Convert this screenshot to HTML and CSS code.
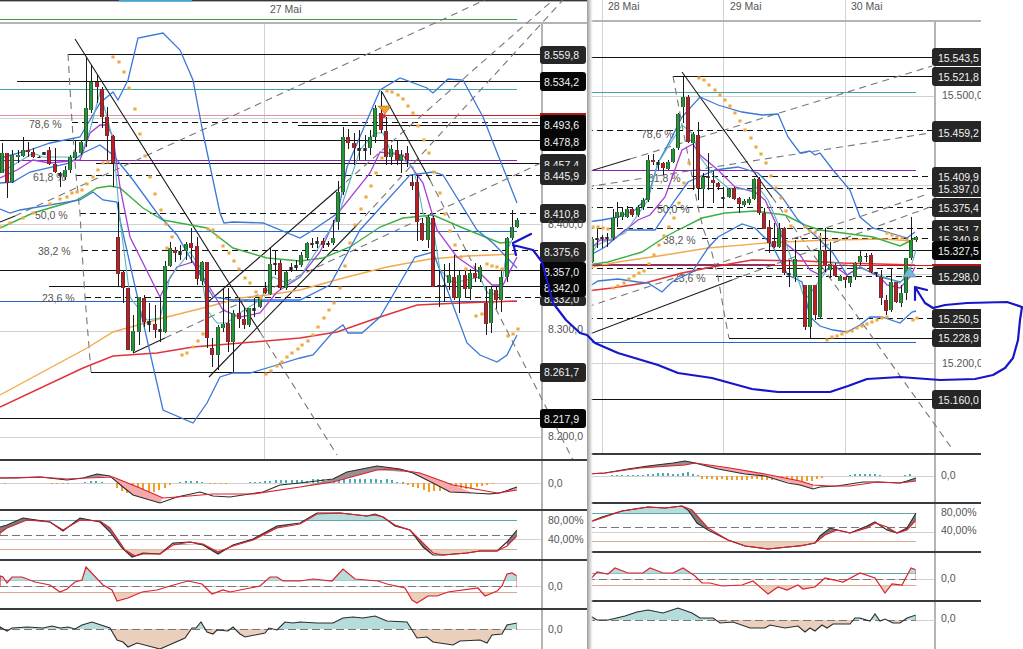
FILE: index.html
```html
<!DOCTYPE html>
<html>
<head>
<meta charset="UTF-8">
<title>Charts</title>
<link rel="stylesheet" href="styles.css">
</head>
<body>
<div class="screen">

<!-- left chart -->
<section class="chart chart-left">
<svg class="plot" width="587" height="649" viewBox="0 0 587 649">
<defs>
<clipPath id="lPlot"><rect x="0" y="0" width="516.6" height="649"/></clipPath>
<clipPath id="lStochUp"><rect x="0" y="511" width="517" height="9"/></clipPath>
<clipPath id="lStochDn"><rect x="0" y="549.5" width="517" height="10"/></clipPath>
<clipPath id="lCciUp"><rect x="0" y="561" width="517" height="19.7"/></clipPath>
<clipPath id="lCciDn"><rect x="0" y="592.7" width="517" height="16"/></clipPath>
<clipPath id="lMomUp"><rect x="0" y="610" width="517" height="19"/></clipPath>
<clipPath id="lMomDn"><rect x="0" y="629" width="517" height="20"/></clipPath>
<path id="lStoch" d="M0 535L0 533 7 528 27 520 50 522 63 530 80 520 100 521 110 528 125 550 135 556 143 554 160 554 173 545 190 542 203 544 218 552 233 546 253 540 277 528 300 524 317 514 340 513 367 516 375 515 383 517 395 525 410 530 423 543 433 553 443 555 467 553 480 551 497 551 507 546 517 536 517 535"/>
<path id="lCci" d="M0 586L0 576 3 577 7 583 12 577 22 577 35 582 50 585 60 592 67 589 75 582 82 580 86 567 103 585 112 590 117 601 128 598 142 592 157 590 170 586 188 581 202 584 212 594 223 590 230 592 250 588 260 586 270 577 277 577 283 581 300 581 313 579 332 581 343 569 355 579 378 581 387 584 405 588 412 600 417 603 428 596 437 596 448 592 478 588 485 596 497 591 502 586 507 574 512 573 517 576 517 586"/>
<path id="lMom" d="M0 629L0 627 7 631 12 628 27 627 43 628 52 626 60 628 68 627 75 629 82 625 92 622 110 628 117 640 123 642 128 647 137 643 160 649 185 638 192 628 196 628 201 622 207 632 213 634 217 630 228 631 233 627 240 634 245 637 265 633 269 628 277 630 285 622 293 623 300 622 317 623 333 623 343 618 353 617 363 618 375 616 387 621 407 622 417 638 427 637 433 642 453 645 460 641 480 640 487 643 492 635 502 634 507 625 517 623 517 629"/>
<path id="lGreen" d="M2 153V173M12 155V182M18 155V157M23 150V156M65 170V177M70 157V170M75 152V158M81 142V153M86 108V140M91 82V110M133 331V351M139 297V332M165 266V332M170 248V266M186 244V251M202 262V281M218 327V355M223 324V328M233 313V342M249 308V325M260 298V307M270 264V294M286 272V288M301 255V265M307 243V258M333 238V243M338 192V222M343 137V192M370 137V148M375 108V137M391 149V157M401 155V160M428 217V240M449 275V283M459 275V298M470 273V289M480 267V279M491 289V323M501 277V300M507 238V277M512 227V238M517 220V227"/>
<path id="lRed" d="M7 153V183M28 150V152M33 152V157M49 150V164M55 164V172M97 82V87M102 89V117M107 117V136M113 136V163M118 237V274M123 272V288M128 288V350M144 298V322M155 324V330M175 250V253M191 243V248M197 246V279M207 262V338M212 348V355M228 323V342M239 313V319M244 319V325M265 288V293M280 263V288M323 241V245M348 137V143M354 143V148M381 113V130M386 131V157M397 150V160M407 153V160M412 182V186M417 182V222M422 223V240M433 218V287M454 277V298M465 275V289M475 273V278M486 303V324M496 290V300"/>
</defs>

<rect class="top-rule" x="0" y="0" width="587" height="1.4"/>
<rect class="top-tab" x="119" y="0" width="73" height="1.4"/>
<text class="date" x="270" y="13">27 Mai</text>

<path class="grid crisp" d="M264.5 24V460M0 118.5H541M0 224.5H541M0 331.5H541M0 437.5H541M0 483.5H541M0 539.5H541M0 586.5H541"/>
<path class="g-line crisp" d="M0 19.5H517"/>
<path class="frame crisp" d="M0 22.5H587M541.5 22V649"/>

<path class="pink crisp" d="M0 115.5H380"/>
<path class="teal crisp" d="M0 89.5H517"/>
<path class="blue crisp" d="M0 231.5H517M0 301.5H517"/>
<path class="purple crisp" d="M0 160.5H517"/>
<path class="level crisp" d="M68 54.5H540M17 81.5H540M298 125.5H540M0 140.5H540M96 163.5H540M0 270.5H540M49 286.5H540M91 372.5H540M0 418.5H540"/>
<path class="fib crisp" d="M72 122.5H540M76 175.5H540M80 213.5H540M82 250.5H540M85 297.5H540"/>
<path class="red-level crisp" d="M380 115.5H541"/>

<text class="fib-text" x="29" y="128">78,6 %</text>
<text class="fib-text" x="33" y="181">61,8 %</text>
<text class="fib-text" x="35" y="219">50,0 %</text>
<text class="fib-text" x="38" y="255">38,2 %</text>
<text class="fib-text" x="42" y="302">23,6 %</text>

<path class="dash" d="M68 54L72 122 76 175 80 213 82 250 85 297 91 372"/>
<path class="dash" d="M15 216L485 0M165 338L541 163M337 190L553 0M357 225L563 0M260 332L337 455M430 180L573 460"/>
<path class="trend" d="M75 39L260 332M382 92L430 180M0 222L15 216M133 353L165 338M208 302L337 190M209 377L357 225"/>

<path class="ma-red" d="M0 407L83 368 113 356 157 353 193 347 217 345 300 338 337 332 380 317 417 305 460 303 517 301"/>
<path class="ma-orange" d="M0 395L87 348 113 332 163 318 207 307 240 298 267 295 300 290 347 277 387 267 430 259 467 256 517 254"/>
<path class="ma-green" d="M0 228L33 213 77 200 97 188 110 186 120 188 143 208 163 220 207 228 233 248 267 258 300 261 323 258 350 247 380 227 403 218 433 215 463 228 500 243 510 242"/>
<path class="band" d="M0 158L30 150 50 143 80 137 100 103 113 92 118 100 128 80 138 38 163 33 180 50 193 80 203 133 220 213 224 223 233 222 263 223 300 238 313 230 338 213 347 167 380 90 400 78 427 88 433 93 448 79 463 80 483 117 517 203"/>
<path class="band" d="M0 183L13 182 30 172 70 163 83 153 100 145 113 155 133 180 157 213 177 235 213 297 233 300 267 300 300 300 330 285 360 230 410 175 433 172 443 175 477 230 493 243 517 268"/>
<path class="band" d="M0 209L10 213 20 210 80 200 93 192 103 200 117 202 120 220 163 410 193 423 207 403 220 377 233 373 250 373 277 365 300 358 313 355 333 332 343 325 348 333 362 333 380 317 400 283 415 257 433 252 450 297 467 343 480 355 497 362 507 355 517 335"/>
<path class="ma-purple" d="M0 178L17 170 33 160 50 163 80 160 90 133 100 125 107 125 113 137 120 187 130 237 160 297 167 283 177 267 193 262 207 283 223 310 240 317 260 313 277 292 300 277 320 252 338 213 370 173 380 152 403 155 423 183 437 230 457 257 480 273 492 285 503 285 517 257"/>
<path class="ma-cyan" d="M0 173L17 163 33 153 43 157 80 157 90 130 100 92 107 117 113 140 120 220 130 297 147 320 160 318 170 277 190 252 200 267 207 310 217 323 227 323 240 313 260 300 273 277 287 283 300 277 338 217 360 150 375 133 383 133 390 150 413 167 418 187 423 213 433 227 440 270 453 283 480 277 487 293 500 295 507 250 512 240"/>

<path class="wick" d="M2 143V173M7 153V198M12 150V183M18 150V163M23 137V157M28 142V157M33 148V158M39 156V158M44 152V155M49 147V165M55 148V173M60 172V187M65 166V180M70 155V173M75 140V160M81 140V155M86 57V147M91 65V113M97 75V103M102 87V128M107 107V160M113 135V187M118 202V286M123 270V303M128 288V350M133 315V353M139 297V345M144 295V327M149 303V332M155 305V338M160 297V342M165 261V333M170 242V267M175 247V262M180 245V260M186 242V260M191 228V263M197 237V285M202 261V285M207 262V348M212 338V367M218 325V370M223 288V332M228 288V352M233 310V372M239 298V328M244 308V329M249 308V327M254 298V317M260 297V308M265 282V294M270 248V295M275 250V275M280 260V290M286 270V290M291 263V272M296 260V270M301 252V267M307 242V260M312 238V248M317 237V248M323 238V248M328 241V247M333 220V245M338 181V230M343 127V195M348 129V149M354 133V165M359 130V160M365 135V160M370 130V155M375 105V143M381 91V133M386 117V165M391 145V165M397 140V165M401 150V173M407 146V167M412 175V190M417 175V241M422 218V241M428 215V248M433 216V287M439 270V307M444 264V302M449 263V290M454 255V300M459 270V313M465 268V298M470 269V300M475 263V282M480 265V282M486 287V335M491 286V333M496 287V309M501 268V312M507 237V282M512 210V240M517 218V228"/>
<path class="body-k" d="M39 157V158M44 152V155M60 173V176M149 321V325M160 329V332M180 251V255M254 308V311M275 263V265M291 267V270M296 265V268M312 243V245M317 241V244M328 243V245M359 148V151M365 148V151M439 285V287M444 285V287"/>
<use href="#lGreen" class="edge"/><use href="#lGreen" class="body-g"/>
<use href="#lRed" class="edge"/><use href="#lRed" class="body-r"/>

<path class="sar" d="M0 227h0M10 223h0M23 218h0M33 213h0M50 204h0M60 199h0M67 197h0M72 193h0M77 192h0M82 190h0M87 184h0M93 177h0M98 170h0M103 163h0M108 162h0M113 57h0M119 62h0M124 72h0M129 88h0M135 109h0M140 134h0M145 156h0M150 177h0M155 194h0M161 210h0M166 224h0M172 237h0M167 248h0M182 355h0M187 353h0M193 347h0M198 341h0M203 334h0M208 229h0M213 230h0M218 237h0M223 246h0M229 253h0M234 261h0M239 269h0M245 278h0M250 283h0M256 292h0M261 298h0M266 374h0M271 371h0M277 366h0M282 362h0M287 357h0M292 353h0M298 349h0M302 345h0M308 341h0M313 335h0M318 327h0M324 318h0M329 310h0M334 303h0M340 288h0M345 266h0M350 243h0M355 225h0M361 209h0M366 197h0M371 186h0M376 173h0M382 158h0M387 91h0M392 92h0M398 95h0M403 99h0M408 106h0M413 113h0M418 126h0M424 140h0M429 153h0M434 172h0M440 193h0M445 214h0M450 231h0M455 245h0M461 257h0M466 269h0M476 316h0M482 314h0M487 264h0M492 266h0M497 267h0M502 269h0M508 336h0M513 334h0M518 329h0"/>
<path class="tri-sell" d="M378 106H391L385 114Z"/>
<circle class="dot-red" cx="384" cy="116" r="2"/>

<rect class="tag" x="540" y="46" width="46" height="18" rx="3"/><text class="tag-text" x="544" y="59">8.559,8</text>
<rect class="tag tag-black" x="540" y="72" width="46" height="19" rx="3"/><text class="tag-text" x="544" y="86">8.534,2</text>
<rect class="red-tag" x="540" y="113" width="46" height="4"/>
<rect class="tag tag-black" x="540" y="115" width="46" height="36" rx="3"/><text class="tag-text" x="544" y="129">8.493,6</text><text class="tag-text" x="544" y="146">8.478,8</text>
<rect class="tag" x="540" y="154" width="46" height="16" rx="3"/><text class="tag-text" x="544" y="169">8.457,4</text>
<rect class="tag" x="540" y="166" width="46" height="19" rx="3"/><text class="tag-text" x="544" y="180">8.445,9</text>
<rect class="tag" x="540" y="204" width="46" height="19" rx="3"/><text class="tag-text" x="544" y="218">8.410,8</text>
<text class="axis-text" x="548" y="228">8.400,0</text>
<rect class="tag" x="540" y="242" width="46" height="20" rx="3"/><text class="tag-text" x="544" y="256">8.375,6</text>
<rect class="tag" x="540" y="296" width="46" height="10" rx="3"/><text class="tag-text" x="544" y="303">8.332,0</text>
<rect class="tag tag-black" x="540" y="262" width="46" height="35" rx="3"/><text class="tag-text" x="544" y="276">8.357,0</text><text class="tag-text" x="544" y="292">8.342,0</text>
<text class="axis-text" x="548" y="333">8.300,0</text>
<rect class="tag" x="540" y="363" width="46" height="19" rx="3"/><text class="tag-text" x="544" y="376">8.261,7</text>
<rect class="tag tag-black" x="540" y="409" width="46" height="19" rx="3"/><text class="tag-text" x="544" y="423">8.217,9</text>
<text class="axis-text" x="548" y="440">8.200,0</text>

<!-- macd -->
<path class="hist-up" d="M85 483V482M91 483V481M96 483V481M102 483V482M180 483V482M186 483V481M191 483V481M197 483V481M202 483V482M250 483V482M255 483V482M260 483V482M265 483V481M270 483V481M276 483V480M281 483V480M286 483V480M292 483V480M297 483V480M302 483V480M307 483V481M313 483V479M318 483V479M323 483V479M329 483V479M334 483V479M339 483V479M344 483V479M350 483V479M355 483V479M360 483V479M365 483V479M371 483V479M376 483V479M381 483V480M387 483V479M392 483V480M397 483V482M403 483V482"/>
<path class="hist-dn" d="M5 483V484M52 483V484M57 483V484M63 483V484M68 483V484M117 483V488M122 483V491M127 483V493M133 483V495M138 483V494M143 483V494M149 483V492M154 483V492M159 483V490M165 483V488M170 483V485M210 483V484M215 483V484M221 483V484M226 483V484M403 483V484M408 483V485M413 483V487M418 483V488M424 483V490M429 483V492M434 483V491M440 483V491M445 483V490M450 483V491M456 483V490M461 483V490M466 483V489M471 483V488M477 483V487M482 483V486M487 483V485M493 483V484"/>
<path class="fill-dn-macd" d="M113 477L140 488 163 498 160 503 133 495 123 487ZM413 473L433 483 450 492 473 493 497 493 517 490 517 487 500 493 490 494 473 493 453 485 420 473Z"/>
<path class="fill-up-macd" d="M83 478L97 474 110 476 87 478ZM300 487L333 479 347 472 377 466 400 469 413 473 393 469 377 470 333 482ZM377 470L400 469 420 473Z"/>
<path class="line-k" d="M0 478L17 478 40 477 67 480 83 478 97 474 110 476 123 487 133 495 160 503 177 497 200 492 213 496 230 497 263 492 280 485 300 483 333 479 347 472 377 466 400 469 413 473 433 483 450 492 473 493 490 494 500 493 517 487"/>
<path class="line-r" d="M0 478L40 477 67 479 87 478 113 477 140 488 163 498 177 497 213 494 253 494 300 487 333 482 377 470 393 469 420 473 453 485 497 493 517 490"/>

<!-- stochastic -->
<path class="teal-soft crisp" d="M0 520.5H517"/>
<path class="dash-sub" d="M0 535.5H517"/>
<path class="tan-soft crisp" d="M0 549.5H517"/>
<use href="#lStoch" class="fill-up" clip-path="url(#lStochUp)"/>
<use href="#lStoch" class="fill-dn" clip-path="url(#lStochDn)"/>
<path class="fill-gap" d="M0 527L7 525 23 518 50 522 63 531 80 518 100 522 110 532 122 548 132 557 135 556 125 550 110 528 100 521 80 520 63 530 50 522 27 520 7 528 0 533ZM173 543L203 545 218 554 233 545 218 552 203 544 173 545ZM233 545L253 539 277 526 300 523 277 528 253 540ZM410 530L423 547 433 555 423 543ZM507 542L517 530 517 536 507 546Z"/>
<path class="line-k" d="M0 527L7 525 23 518 50 522 63 531 80 518 100 522 110 532 122 548 132 557 143 553 160 554 173 543 190 542 203 545 218 554 233 545 253 539 277 526 300 523 317 513 340 513 367 516 375 514 383 517 395 526 410 530 423 547 433 555 443 555 467 553 480 551 497 551 507 542 517 530"/>
<g clip-path="url(#lPlot)"><use href="#lStoch" class="line-r"/></g>

<!-- cci -->
<path class="teal-soft crisp" d="M0 580.5H517"/>
<path class="dash-sub" d="M0 586.5H517"/>
<path class="tan-soft crisp" d="M0 592.5H517"/>
<use href="#lCci" class="fill-up" clip-path="url(#lCciUp)"/>
<use href="#lCci" class="fill-dn" clip-path="url(#lCciDn)"/>
<g clip-path="url(#lPlot)"><use href="#lCci" class="line-r"/></g>

<!-- momentum -->
<use href="#lMom" class="fill-up" clip-path="url(#lMomUp)"/>
<use href="#lMom" class="fill-dn" clip-path="url(#lMomDn)"/>
<path class="dash-sub" d="M0 629.5H517"/>
<path class="grid crisp" d="M517 629.5H541"/>
<g clip-path="url(#lPlot)"><use href="#lMom" class="line-k"/></g>

<path class="split crisp" d="M0 460H587M0 510H587M0 560H587M0 609H587"/>
<text class="axis-text" x="548" y="487">0,0</text>
<text class="axis-text" x="548" y="524">80,00%</text>
<text class="axis-text" x="548" y="543">40,00%</text>
<text class="axis-text" x="548" y="590">0,0</text>
<text class="axis-text" x="548" y="633">0,0</text>
</svg>
</section>

<!-- right chart -->
<section class="chart chart-right">
<svg class="plot" width="436" height="649" viewBox="587 0 436 649">
<defs>
<clipPath id="rPlot"><rect x="587" y="0" width="328.6" height="649"/></clipPath>
<clipPath id="rStochUp"><rect x="587" y="504" width="330" height="9"/></clipPath>
<clipPath id="rStochDn"><rect x="587" y="541.5" width="330" height="10"/></clipPath>
<clipPath id="rCciUp"><rect x="587" y="553" width="330" height="20.5"/></clipPath>
<clipPath id="rCciDn"><rect x="587" y="585.5" width="330" height="15"/></clipPath>
<clipPath id="rMomUp"><rect x="587" y="601" width="330" height="19"/></clipPath>
<clipPath id="rMomDn"><rect x="587" y="620" width="330" height="29"/></clipPath>
<clipPath id="rTags"><rect x="587" y="0" width="394" height="649"/></clipPath>
<path id="rStoch" d="M587 527L587 523 602 518 622 511 648 507 665 508 682 506 692 510 708 528 728 540 745 546 768 549 788 547 805 545 815 543 825 535 837 530 850 533 867 528 875 523 887 527 897 533 907 530 916 520 916 527"/>
<path id="rCci" d="M587 579L587 583 597 572 608 574 615 568 628 573 643 573 650 568 663 573 673 573 683 568 695 576 702 583 710 583 722 586 742 585 753 581 768 594 778 587 787 590 798 585 803 589 815 587 825 578 843 582 860 573 875 578 885 593 892 584 902 585 911 568 916 570 916 579"/>
<path id="rMom" d="M587 620L587 621 592 617 597 620 608 620 625 616 637 612 648 610 663 613 678 608 692 613 700 618 713 618 720 623 733 622 750 628 765 628 770 625 785 628 798 626 805 632 810 628 815 631 822 625 827 628 833 624 850 624 855 618 860 618 870 621 875 614 880 621 885 619 893 623 900 623 907 618 916 615 916 620"/>
<path id="rGreen" d="M592 239V262M613 218V238M617 212V218M622 212V217M627 209V217M638 207V215M643 200V207M648 160V200M668 162V169M673 149V162M678 114V148M683 97V107M693 134V143M703 177V189M729 189V197M744 201V205M749 199V203M754 179V199M779 229V247M795 259V277M810 285V327M820 250V317M830 264V270M840 276V281M850 277V283M855 263V277M860 256V262M891 282V310M901 293V303M906 258V293M911 240V258M916 237V240"/>
<path id="rRed" d="M632 209V215M653 160V162M663 163V168M688 97V142M698 135V188M713 180V183M718 183V187M734 188V199M739 198V204M759 179V213M764 213V229M769 227V243M774 241V247M784 228V273M805 285V327M815 285V315M825 250V265M835 266V276M845 277V280M871 255V272M881 277V298M886 300V311M896 282V302"/>
</defs>

<text class="date" x="608" y="10">28 Mai</text>
<text class="date" x="730" y="10">29 Mai</text>
<text class="date" x="851" y="10">30 Mai</text>

<path class="grid crisp" d="M602.5 0V455M723.5 0V455M845.5 0V455M587 96.5H935M587 185.5H935M587 274.5H935M587 363.5H935M587 476.5H935M587 532.5H935M587 579.5H935"/>
<path class="frame crisp" d="M587 20.5H981M935 20V649"/>

<path class="teal crisp" d="M587 92.5H916"/>
<path class="purple crisp" d="M587 170.5H916"/>
<path class="purple-dim crisp" d="M587 264.5H775"/>
<path class="blue crisp" d="M587 342.5H916"/>
<path class="level crisp" d="M587 57.5H932M673 76.5H932M765 250.5H932M729 338.5H932M587 399.5H932"/>
<path class="fib crisp" d="M587 130.5H932M692 176.5H932M587 188.5H932M587 207.5H932M587 228.5H932M702 238.5H932M587 268.5H932M716 276.5H932M587 318.5H932"/>

<text class="fib-text" x="641" y="138">78,6 %</text>
<text class="fib-text" x="648" y="182">61,8 %</text>
<text class="fib-text" x="657" y="213">50,0 %</text>
<text class="fib-text" x="663" y="244">38,2 %</text>
<text class="fib-text" x="673" y="282">23,6 %</text>

<path class="dash" d="M673 76L683 130 692 176 698 207 703 228 712 253 718 277 725 318 729 338"/>
<path class="dash" d="M630 159L932 66M587 187L930 133M587 307L928 194M732 280L930 207M772 197L953 450"/>
<path class="trend" d="M587 172L630 159M682 72L772 197M587 335L732 280"/>

<path class="ma-red" d="M587 291L612 288 645 283 682 273 712 267 752 260 805 261 843 263 915 265"/>
<path class="ma-orange" d="M587 268L618 262 665 255 708 248 765 243 805 241 833 240 883 239 913 241"/>
<path class="ma-green" d="M587 265L608 262 642 252 665 237 678 230 702 218 725 213 755 211 785 215 805 225 820 230 843 233 873 237 900 246 916 238"/>
<path class="band" d="M587 222L602 220 618 217 635 210 648 197 658 163 672 137 682 117 700 97 718 105 742 112 762 115 778 114 788 137 800 153 810 151 815 155 820 153 833 170 850 190 860 217 873 228 897 235 907 238 915 232"/>
<path class="band" d="M587 257L605 247 625 230 655 230 675 200 688 182 715 170 738 167 758 173 782 197 798 220 820 240 833 253 847 275 860 267 880 277 900 282 907 277"/>
<path class="band" d="M587 288L598 281 618 279 638 282 648 283 662 292 672 282 692 272 708 248 718 237 742 224 755 228 772 245 785 270 788 275 802 282 810 317 820 326 833 330 847 332 860 325 870 317 882 317 900 323 912 312 916 311"/>
<path class="ma-purple" d="M587 253L600 240 613 240 628 228 638 220 650 215 665 197 682 150 693 144 700 155 718 170 735 187 755 192 765 200 785 243 800 255 810 270 820 275 833 265 847 275 860 267 880 277 887 285 900 288 910 277 915 267"/>
<path class="ma-cyan" d="M587 262L597 245 625 233 648 200 658 163 682 125 692 133 700 157 715 177 728 188 752 190 758 187 768 200 785 240 795 270 805 300 820 280 833 262 860 268 880 275 900 283 910 270 916 250"/>

<path class="wick" d="M592 237V263M597 228V248M602 235V248M607 233V247M613 209V240M617 202V227M622 207V220M627 206V218M632 207V217M638 205V217M643 198V210M648 155V202M653 154V165M658 160V170M663 162V175M668 160V170M673 148V163M678 113V150M683 76V123M688 95V143M693 132V190M698 122V200M703 173V208M708 153V190M713 171V203M718 182V190M723 187V208M729 188V198M734 187V200M739 197V213M744 199V207M749 197V205M754 178V200M759 177V215M764 208V229M769 220V253M774 223V248M779 223V248M784 227V275M789 260V287M795 240V282M805 285V330M810 285V338M815 285V320M820 233V318M825 228V272M830 242V278M835 263V277M840 275V281M845 277V288M850 277V287M855 262V280M860 250V265M866 253V262M871 253V273M876 272V276M881 270V305M886 295V315M891 268V312M896 282V303M901 285V307M906 258V300M911 217V260M916 236V242"/>
<path class="body-k" d="M597 238V240M602 237V239M607 237V239M658 162V165M708 176V178M723 197V199M789 273V275M866 256V257M876 272V274"/>
<use href="#rGreen" class="edge"/><use href="#rGreen" class="body-g"/>
<use href="#rRed" class="edge"/><use href="#rRed" class="body-r"/>

<path class="sar" d="M588 225h0M593 227h0M598 227h0M603 228h0M608 229h0M613 288h0M618 286h0M624 283h0M629 279h0M634 276h0M639 273h0M644 271h0M649 264h0M654 255h0M659 245h0M664 236h0M669 227h0M674 218h0M679 203h0M684 183h0M689 163h0M699 78h0M704 80h0M709 85h0M715 90h0M720 95h0M725 100h0M730 106h0M735 113h0M740 121h0M745 130h0M751 138h0M756 147h0M761 154h0M766 163h0M771 176h0M776 188h0M781 198h0M786 211h0M791 226h0M805 227h0M810 231h0M815 233h0M820 237h0M827 340h0M832 337h0M837 336h0M842 334h0M847 332h0M852 331h0M857 328h0M862 326h0M867 324h0M872 322h0M877 320h0M882 318h0M887 317h0M887 233h0M892 235h0M897 237h0M902 238h0M907 240h0M913 320h0M917 318h0"/>
<path class="tri-buy" d="M903 277H916L909 267Z"/>

<g clip-path="url(#rTags)">
<path class="red-level crisp" d="M587 265.5H981"/>
<rect class="tag" x="932" y="48" width="52" height="18" rx="3"/><text class="tag-text" x="938" y="62">15.543,5</text>
<rect class="tag" x="932" y="67" width="52" height="19" rx="3"/><text class="tag-text" x="938" y="81">15.521,8</text>
<text class="axis-text" x="942" y="99">15.500,0</text>
<rect class="tag" x="932" y="121" width="52" height="21" rx="3"/><text class="tag-text" x="938" y="137">15.459,2</text>
<rect class="tag" x="932" y="167" width="52" height="30" rx="3"/><text class="tag-text" x="938" y="181">15.409,9</text><text class="tag-text" x="938" y="193">15.397,0</text>
<rect class="tag" x="932" y="198" width="52" height="19" rx="3"/><text class="tag-text" x="938" y="212">15.375,4</text>
<rect class="tag" x="932" y="220" width="52" height="14" rx="3"/><text class="tag-text" x="938" y="234">15.351,7</text>
<rect class="tag" x="932" y="231" width="52" height="10"/><text class="tag-text" x="938" y="244">15.340,8</text>
<rect class="tag tag-black" x="932" y="241" width="52" height="19" rx="3"/><text class="tag-text" x="938" y="255">15.327,5</text>
<rect class="red-tag" x="932" y="264" width="52" height="2"/>
<rect class="tag" x="932" y="266" width="52" height="19" rx="3"/><text class="tag-text" x="938" y="281">15.298,0</text>
<rect class="tag" x="932" y="309" width="52" height="19" rx="3"/><text class="tag-text" x="938" y="323">15.250,5</text>
<rect class="tag" x="932" y="329" width="52" height="18" rx="3"/><text class="tag-text" x="938" y="342">15.228,9</text>
<text class="axis-text" x="942" y="367">15.200,0</text>
<rect class="tag" x="932" y="390" width="52" height="19" rx="3"/><text class="tag-text" x="938" y="404">15.160,0</text>
</g>

<!-- macd -->
<path class="hist-up" d="M612 476V475M617 476V475M622 476V475M628 476V475M633 476V475M638 476V475M643 476V475M648 476V474M653 476V474M658 476V473M663 476V473M668 476V473M673 476V474M678 476V474M683 476V473M688 476V472M693 476V474M698 476V475M850 476V475M855 476V474M860 476V474M865 476V474M870 476V474M875 476V474M880 476V475M905 476V475M910 476V474"/>
<path class="hist-dn" d="M702 476V479M707 476V479M712 476V479M717 476V480M722 476V479M727 476V480M732 476V480M737 476V480M742 476V480M747 476V480M752 476V479M757 476V479M762 476V480M767 476V480M772 476V480M777 476V480M782 476V480M787 476V480M792 476V480M797 476V480M802 476V481M807 476V481M812 476V481M817 476V479M822 476V478"/>
<path class="fill-dn-macd" d="M695 463L730 468 765 474 800 481 813 485 813 489 800 485 765 476 745 474 718 469Z"/>
<path class="fill-up-macd" d="M628 469L648 466 673 463 685 461 695 463 685 465 640 468ZM900 483L907 481 916 478 916 481Z"/>
<path class="line-k" d="M587 474L605 473 628 469 648 466 673 463 685 461 695 463 718 469 745 474 765 476 788 483 800 485 813 489 820 487 837 486 863 482 877 482 900 483 907 481 916 478"/>
<path class="line-r" d="M587 474L605 473 640 468 685 465 695 463 730 468 765 474 800 481 813 485 830 486 850 486 877 482 900 483 916 481"/>

<!-- stochastic -->
<path class="teal-soft crisp" d="M587 513.5H916"/>
<path class="dash-sub" d="M587 527.5H916"/>
<path class="tan-soft crisp" d="M587 541.5H916"/>
<use href="#rStoch" class="fill-up" clip-path="url(#rStochUp)"/>
<use href="#rStoch" class="fill-dn" clip-path="url(#rStochDn)"/>
<path class="fill-gap" d="M688 510L697 523 708 530 708 528 692 510ZM815 543L820 536 830 528 837 530 825 535ZM850 533L867 526 875 522 867 528ZM887 530L897 533 887 527ZM897 533L907 528 916 513 916 520 907 530Z"/>
<path class="line-k" d="M587 523L602 517 622 511 648 507 665 508 682 506 688 510 697 523 708 530 728 540 745 546 768 549 788 547 800 546 815 543 820 536 830 528 837 530 850 533 867 526 875 522 887 530 897 533 907 528 916 513"/>
<g clip-path="url(#rPlot)"><use href="#rStoch" class="line-r"/></g>

<!-- cci -->
<path class="teal-soft crisp" d="M587 573.5H916"/>
<path class="dash-sub" d="M587 579.5H916"/>
<path class="tan-soft crisp" d="M587 585.5H916"/>
<use href="#rCci" class="fill-up" clip-path="url(#rCciUp)"/>
<use href="#rCci" class="fill-dn" clip-path="url(#rCciDn)"/>
<g clip-path="url(#rPlot)"><use href="#rCci" class="line-r"/></g>

<!-- momentum -->
<use href="#rMom" class="fill-up" clip-path="url(#rMomUp)"/>
<use href="#rMom" class="fill-dn" clip-path="url(#rMomDn)"/>
<path class="dash-sub" d="M587 620.5H916"/>
<path class="grid crisp" d="M916 620.5H935"/>
<g clip-path="url(#rPlot)"><use href="#rMom" class="line-k"/></g>

<path class="split crisp" d="M587 454H981M587 503H981M587 552H981M587 601H981"/>
<text class="axis-text" x="941" y="479">0,0</text>
<text class="axis-text" x="941" y="516">80,00%</text>
<text class="axis-text" x="941" y="534">40,00%</text>
<text class="axis-text" x="941" y="582">0,0</text>
<text class="axis-text" x="941" y="622">0,0</text>
</svg>
</section>

<!-- pen strokes drawn over both charts -->
<svg class="pen" width="1023" height="649" viewBox="0 0 1023 649">
<path d="M531 234L513 243 516 255M513 245L533 250 542 262 553 303 566 320 580 333 587 335 595 343 618 353 658 365 678 373 712 378 752 389 778 392 805 392 830 392 848 386 867 379 900 377 940 380 975 379 993 375 1005 368 1013 358 1018 340 1020 320 1022 307 1007 302 967 303 945 305 933 308 925 303 915 287 915 300M915 287L927 290"/>
</svg>

</div>
</body>
</html>
```

FILE: styles.css
```css
*{margin: 0;padding: 0;}
body{background: #fff;font-family: "Liberation Sans", Arial, sans-serif;}
.screen{position: relative;display: flex;width: 1023px;height: 649px;overflow: hidden;background: #fff;}
.chart{position: relative;height: 649px;}
.chart-left{width: 587px;flex: none;}
.chart-right{flex: 1;}
.chart-right::after{content: "";position: absolute;top: 0;left: 0;width: 6px;height: 100%;background: linear-gradient(to right,#9a9a9a,#e8e8e8 70%,rgba(255,255,255,0));}
.plot{display: block;position: relative;}
.pen{position: absolute;top: 0;left: 0;pointer-events: none;}
.pen path{fill: none;stroke: #1616c8;stroke-width: 2.2;stroke-linejoin: round;stroke-linecap: round;}

.plot > path,.plot use{fill: none;}
.crisp{shape-rendering: crispEdges;}
.top-rule{fill: #33383c;}
.top-tab{fill: #35a8dc;}
.date{font-size: 10.5px;fill: #555;}
.fib-text{font-size: 10.5px;fill: #555;}
.axis-text{font-size: 10.5px;fill: #555;}
.tag{fill: #262626;}
.tag-black{fill: #060606;}
.red-tag{fill: #b01818;}
.tag-text{font-size: 10.5px;fill: #f2f2f2;}

.plot .grid{stroke: #d2d2d2;stroke-width: 1;}
.plot .frame{stroke: #b4b4b4;stroke-width: 2;}
.plot .g-line{stroke: #3d9a3d;stroke-width: 1;}
.plot .pink{stroke: #ef8f9c;stroke-width: 1;}
.plot .teal{stroke: #3fa3a8;stroke-width: 1;}
.plot .blue{stroke: #2565c8;stroke-width: 1;}
.plot .purple{stroke: #8a1fb8;stroke-width: 1;}
.plot .purple-dim{stroke: #5d3fa8;stroke-width: 1;}
.plot .level{stroke: #111;stroke-width: 1;}
.plot .fib{stroke: #111;stroke-width: 1;stroke-dasharray: 6 4;}
.plot .red-level{stroke: #c81e1e;stroke-width: 1;}
.plot .dash{stroke: #777;stroke-width: 1.1;stroke-dasharray: 7 5;}
.plot .trend{stroke: #1a1a1a;stroke-width: 1.1;}

.plot .ma-red{stroke: #e2323a;stroke-width: 1.5;}
.plot .ma-orange{stroke: #f3a94d;stroke-width: 1.4;}
.plot .ma-green{stroke: #3cb043;stroke-width: 1.4;}
.plot .band{stroke: #3a78d8;stroke-width: 1.3;}
.plot .ma-purple{stroke: #a63fd8;stroke-width: 1.3;}
.plot .ma-cyan{stroke: #55b5bd;stroke-width: 1.1;}

.plot .wick{stroke: #1a1a1a;stroke-width: 1;shape-rendering: crispEdges;}
.plot .edge{stroke: #2a2a2a;stroke-width: 3.8;}
.plot .body-g{stroke: #1f9a35;stroke-width: 2.6;}
.plot .body-r{stroke: #c01c22;stroke-width: 2.6;}
.plot .body-k{stroke: #2a2a2a;stroke-width: 3.4;}
.plot .sar{stroke: #f0a840;stroke-width: 3.2;stroke-linecap: square;}
.plot .tri-sell{fill: #f59f25;stroke: #7a5a20;stroke-width: .5;}
.plot .tri-buy{fill: #72b9d6;stroke: #3a6a7a;stroke-width: .5;}
.dot-red{fill: #e82020;}

.plot .hist-up{stroke: #45aeb8;stroke-width: 2.6;shape-rendering: crispEdges;}
.plot .hist-dn{stroke: #f59d20;stroke-width: 2.6;shape-rendering: crispEdges;}
.plot .fill-dn-macd{fill: #f6a9ad;}
.plot .fill-up-macd{fill: #9a8f8f;}
.plot .fill-gap{fill: #7c7c7c;}
.plot .fill-up{fill: #b6dcdc;}
.plot .fill-dn{fill: #e9cfbc;}
.plot .line-k{stroke: #2c2c2c;stroke-width: 1.1;}
.plot .line-r{stroke: #dd1f2e;stroke-width: 1.2;}
.plot .teal-soft{stroke: #5fa9ae;stroke-width: 1;}
.plot .tan-soft{stroke: #d9a888;stroke-width: 1;}
.plot .dash-sub{stroke: #777;stroke-width: 1;stroke-dasharray: 8 4;}
.plot .split{stroke: #363c40;stroke-width: 2.4;}
```
